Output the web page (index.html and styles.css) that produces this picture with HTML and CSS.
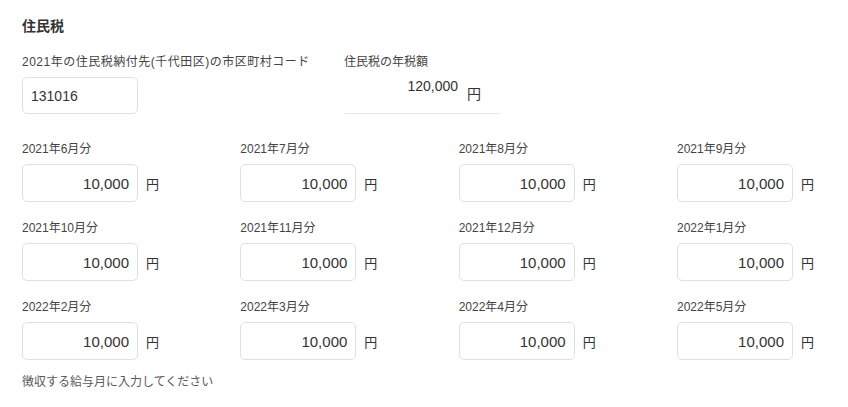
FILE: index.html
```html
<!DOCTYPE html>
<html lang="ja">
<head>
<meta charset="utf-8">
<link rel="stylesheet" href="styles.css">
</head>
<body>
<section class="tax">
  <h2 class="title">住民税</h2>
  <div class="top-row">
    <div class="field field-code">
      <div class="label label-wide">2021年の住民税納付先(千代田区)の市区町村コード</div>
      <div class="box box-code">131016</div>
    </div>
    <div class="field field-annual">
      <div class="label">住民税の年税額</div>
      <div class="annual">
        <span class="annual-value">120,000</span>
        <span class="annual-yen">円</span>
      </div>
    </div>
  </div>
  <div class="months">
    <div class="month"><div class="label">2021年6月分</div><div class="month-row"><div class="box box-amount">10,000</div><span class="yen">円</span></div></div>
    <div class="month"><div class="label">2021年7月分</div><div class="month-row"><div class="box box-amount">10,000</div><span class="yen">円</span></div></div>
    <div class="month"><div class="label">2021年8月分</div><div class="month-row"><div class="box box-amount">10,000</div><span class="yen">円</span></div></div>
    <div class="month"><div class="label">2021年9月分</div><div class="month-row"><div class="box box-amount">10,000</div><span class="yen">円</span></div></div>
    <div class="month"><div class="label">2021年10月分</div><div class="month-row"><div class="box box-amount">10,000</div><span class="yen">円</span></div></div>
    <div class="month"><div class="label">2021年11月分</div><div class="month-row"><div class="box box-amount">10,000</div><span class="yen">円</span></div></div>
    <div class="month"><div class="label">2021年12月分</div><div class="month-row"><div class="box box-amount">10,000</div><span class="yen">円</span></div></div>
    <div class="month"><div class="label">2022年1月分</div><div class="month-row"><div class="box box-amount">10,000</div><span class="yen">円</span></div></div>
    <div class="month"><div class="label">2022年2月分</div><div class="month-row"><div class="box box-amount">10,000</div><span class="yen">円</span></div></div>
    <div class="month"><div class="label">2022年3月分</div><div class="month-row"><div class="box box-amount">10,000</div><span class="yen">円</span></div></div>
    <div class="month"><div class="label">2022年4月分</div><div class="month-row"><div class="box box-amount">10,000</div><span class="yen">円</span></div></div>
    <div class="month"><div class="label">2022年5月分</div><div class="month-row"><div class="box box-amount">10,000</div><span class="yen">円</span></div></div>
  </div>
  <p class="note">徴収する給与月に入力してください</p>
</section>
</body>
</html>
```

FILE: styles.css
```css
* { box-sizing: border-box; }

html, body {
  margin: 0;
  padding: 0;
  background: #ffffff;
}

body {
  font-family: "Liberation Sans", "Noto Sans CJK JP", sans-serif;
  color: #333333;
}

.tax {
  padding: 16px 22px 0 22px;
}

.title {
  margin: 0;
  font-size: 14px;
  line-height: 20px;
  font-weight: bold;
  color: #333333;
}

.top-row {
  display: flex;
  margin-top: 18px;
}

.field-code {
  width: 322px;
}

.field-annual {
  width: 156px;
}

.label {
  font-size: 12px;
  line-height: 16px;
  color: #444444;
  white-space: nowrap;
}

.label-wide {
  letter-spacing: 0.5px;
}

.box {
  width: 116px;
  border: 1px solid #e0e0e0;
  border-radius: 5px;
  background: #ffffff;
  color: #333333;
  display: flex;
  align-items: center;
}

.box-code {
  margin-top: 7px;
  height: 37px;
  padding: 0 8px;
  font-size: 14px;
}

.annual {
  margin-top: 7px;
  height: 37px;
  border-bottom: 1px solid #ece6e0;
  display: flex;
  justify-content: flex-end;
  align-items: flex-start;
}

.annual-value {
  font-size: 14px;
  line-height: 18px;
  color: #333333;
}

.annual-yen {
  font-size: 14px;
  line-height: 16px;
  margin-top: 9px;
  margin-left: 9px;
  margin-right: 19px;
  color: #333333;
}

.months {
  margin-top: 27px;
  display: grid;
  grid-template-columns: repeat(4, 1fr);
  column-gap: 69.33px;
  row-gap: 18px;
}

.month-row {
  margin-top: 7px;
  display: flex;
  align-items: center;
}

.box-amount {
  height: 38px;
  padding: 0 8px;
  justify-content: flex-end;
  font-size: 15px;
}

.yen {
  margin-left: 8px;
  font-size: 13px;
  color: #333333;
}

.note {
  margin: 14px 0 0 0;
  font-size: 12px;
  line-height: 16px;
  color: #5a5a5a;
}
```
